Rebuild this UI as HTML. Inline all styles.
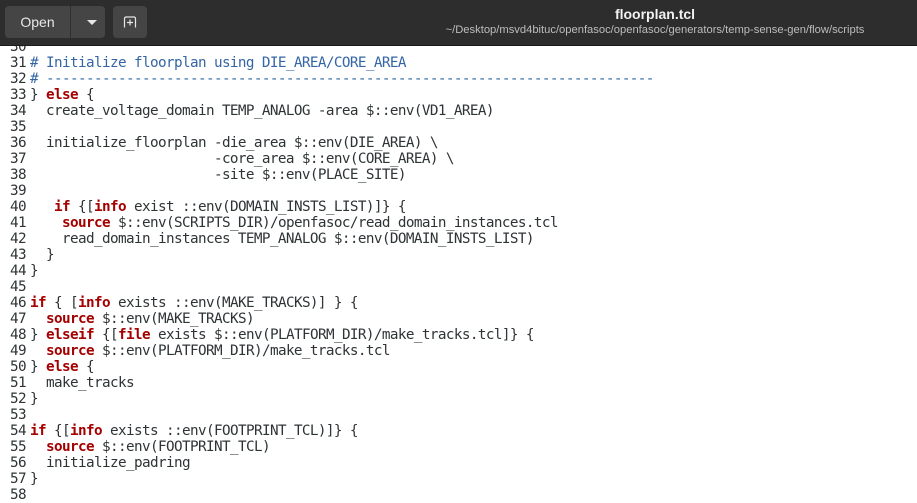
<!DOCTYPE html>
<html><head><meta charset="utf-8"><style>
html,body{margin:0;padding:0;width:917px;height:489px;overflow:hidden;background:#fff;font-family:"Liberation Sans",sans-serif}
.hdr{position:absolute;left:0;top:0;width:917px;height:45px;background:#2d2d2d;border-bottom:1px solid #1b1b1b;z-index:2}
.btn{position:absolute;top:6px;height:32px;background:#454545;border-radius:4px;color:#e8e8e8;font-size:14px}
.open{left:5px;width:100px}
.open .t{position:absolute;left:0;width:65px;text-align:center;line-height:32px}
.open .d{position:absolute;left:65px;top:0;width:1px;height:32px;background:#2f2f2f}
.tri{position:absolute;left:82px;top:14px;width:0;height:0;border-left:5px solid transparent;border-right:5px solid transparent;border-top:5px solid #e8e8e8}
.nt{left:113px;width:34px}
.title{position:absolute;left:415px;width:480px;top:6px;text-align:center;color:#f2f2f2;font-weight:bold;font-size:14px}
.sub{position:absolute;left:415px;width:480px;top:24px;text-align:center;color:#bdbdbd;font-size:11.2px;white-space:nowrap}
pre{position:absolute;left:0;top:39px;margin:0;font-family:"DejaVu Sans Mono","Liberation Mono",monospace;font-size:14.3px;letter-spacing:-0.61px;line-height:16px;color:#2e3436}
.n{display:inline-block;width:26px;text-align:right;color:#2e3436;margin-right:4px;letter-spacing:-0.61px}
.c{color:#3465a4}
.k{color:#a40000;font-weight:bold}
</style></head><body>
<div class="hdr">
 <div class="btn open"><span class="t">Open</span><span class="d"></span><span class="tri"></span></div>
 <div class="btn nt"><svg width="34" height="32" viewBox="0 0 34 32"><path d="M11.5 21.5V12.5a1.5 1.5 0 0 1 1.5-1.5h8a1.5 1.5 0 0 1 1.5 1.5v9" fill="none" stroke="#e8e8e8" stroke-width="1.2"/><path d="M14 16.5h6M17 13.5v6" stroke="#e8e8e8" stroke-width="1.2"/></svg></div>
 <div class="title">floorplan.tcl</div>
 <div class="sub">~/Desktop/msvd4bituc/openfasoc/openfasoc/generators/temp-sense-gen/flow/scripts</div>
</div>
<pre><span class="n">30</span>
<span class="n">31</span><span class="c"># Initialize floorplan using DIE_AREA/CORE_AREA</span>
<span class="n">32</span><span class="c"># ----------------------------------------------------------------------------</span>
<span class="n">33</span>} <span class="k">else</span> {
<span class="n">34</span>  create_voltage_domain TEMP_ANALOG -area $::env(VD1_AREA)
<span class="n">35</span>
<span class="n">36</span>  initialize_floorplan -die_area $::env(DIE_AREA) \
<span class="n">37</span>                       -core_area $::env(CORE_AREA) \
<span class="n">38</span>                       -site $::env(PLACE_SITE)
<span class="n">39</span>
<span class="n">40</span>   <span class="k">if</span> {[<span class="k">info</span> exist ::env(DOMAIN_INSTS_LIST)]} {
<span class="n">41</span>    <span class="k">source</span> $::env(SCRIPTS_DIR)/openfasoc/read_domain_instances.tcl
<span class="n">42</span>    read_domain_instances TEMP_ANALOG $::env(DOMAIN_INSTS_LIST)
<span class="n">43</span>  }
<span class="n">44</span>}
<span class="n">45</span>
<span class="n">46</span><span class="k">if</span> { [<span class="k">info</span> exists ::env(MAKE_TRACKS)] } {
<span class="n">47</span>  <span class="k">source</span> $::env(MAKE_TRACKS)
<span class="n">48</span>} <span class="k">elseif</span> {[<span class="k">file</span> exists $::env(PLATFORM_DIR)/make_tracks.tcl]} {
<span class="n">49</span>  <span class="k">source</span> $::env(PLATFORM_DIR)/make_tracks.tcl
<span class="n">50</span>} <span class="k">else</span> {
<span class="n">51</span>  make_tracks
<span class="n">52</span>}
<span class="n">53</span>
<span class="n">54</span><span class="k">if</span> {[<span class="k">info</span> exists ::env(FOOTPRINT_TCL)]} {
<span class="n">55</span>  <span class="k">source</span> $::env(FOOTPRINT_TCL)
<span class="n">56</span>  initialize_padring
<span class="n">57</span>}
<span class="n">58</span>
</pre>
</body></html>
